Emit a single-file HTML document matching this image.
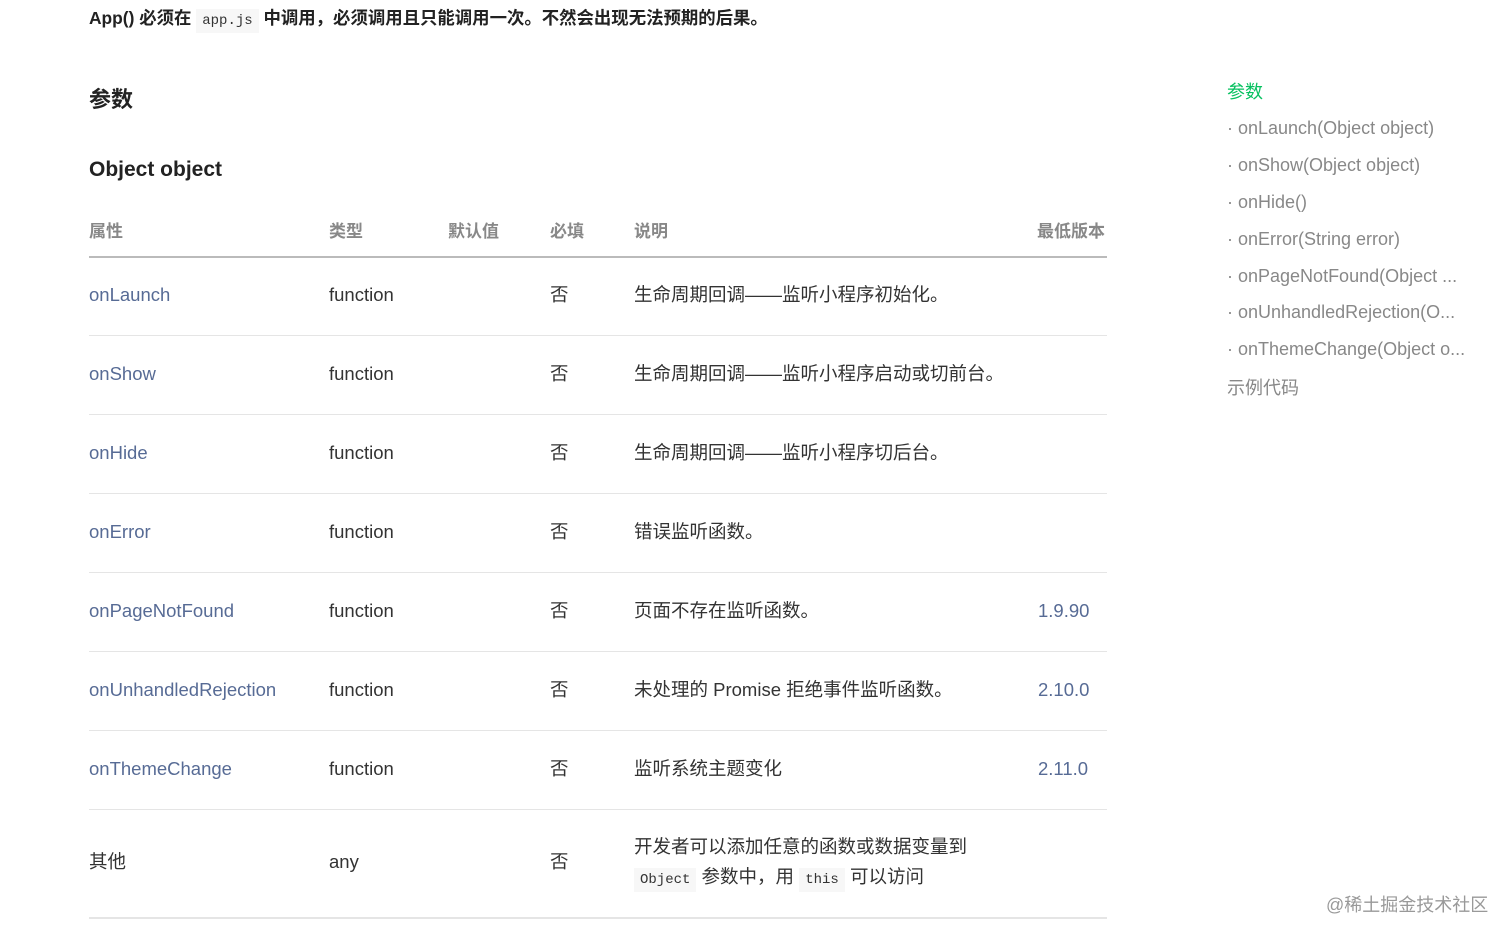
<!DOCTYPE html>
<html><head><meta charset="utf-8"><style>
body{margin:0;width:1512px;height:939px;background:#fff;font-family:"Liberation Sans","Noto Sans CJK SC",sans-serif;color:#333;position:relative;overflow:hidden}
.a{position:absolute;white-space:nowrap}
.t{font-size:18.5px;line-height:24px}
.lk{color:#576b95}
.h{font-size:17px;font-weight:bold;color:#888}
.line{position:absolute;left:89px;width:1018px;height:1px;background:#e5e5e5}
code{font-family:"Liberation Mono",monospace;font-size:14px;background:#f7f7f7;padding:4px 6px;color:#333}
.nav{font-size:18px;color:#888;line-height:24px}
</style></head><body>
<div class="a" style="left:89px;top:6px;font-size:17.4px;font-weight:bold;color:#222;line-height:24px">App() 必须在 <code style="font-weight:normal">app.js</code> 中调用，必须调用且只能调用一次。不然会出现无法预期的后果。</div>
<div class="a" style="left:89px;top:82px;font-size:22px;font-weight:bold;color:#222">参数</div>
<div class="a" style="left:89px;top:158px;font-size:21px;font-weight:bold;color:#222">Object object</div>

<div class="a h" style="left:89px;top:217px">属性</div>
<div class="a h" style="left:329px;top:217px">类型</div>
<div class="a h" style="left:448px;top:217px">默认值</div>
<div class="a h" style="left:550px;top:217px">必填</div>
<div class="a h" style="left:634px;top:217px">说明</div>
<div class="a h" style="left:1037px;top:217px">最低版本</div>
<div class="line" style="top:256px;height:2px;background:#bbb"></div>

<div class="a t lk" style="left:89px;top:283px">onLaunch</div><div class="a t" style="left:329px;top:283px">function</div><div class="a t" style="left:550px;top:283px">否</div><div class="a t" style="left:634px;top:283px">生命周期回调——监听小程序初始化。</div>
<div class="line" style="top:335px"></div>
<div class="a t lk" style="left:89px;top:362px">onShow</div><div class="a t" style="left:329px;top:362px">function</div><div class="a t" style="left:550px;top:362px">否</div><div class="a t" style="left:634px;top:362px">生命周期回调——监听小程序启动或切前台。</div>
<div class="line" style="top:414px"></div>
<div class="a t lk" style="left:89px;top:441px">onHide</div><div class="a t" style="left:329px;top:441px">function</div><div class="a t" style="left:550px;top:441px">否</div><div class="a t" style="left:634px;top:441px">生命周期回调——监听小程序切后台。</div>
<div class="line" style="top:493px"></div>
<div class="a t lk" style="left:89px;top:520px">onError</div><div class="a t" style="left:329px;top:520px">function</div><div class="a t" style="left:550px;top:520px">否</div><div class="a t" style="left:634px;top:520px">错误监听函数。</div>
<div class="line" style="top:572px"></div>
<div class="a t lk" style="left:89px;top:599px">onPageNotFound</div><div class="a t" style="left:329px;top:599px">function</div><div class="a t" style="left:550px;top:599px">否</div><div class="a t" style="left:634px;top:599px">页面不存在监听函数。</div><div class="a t lk" style="left:1038px;top:599px">1.9.90</div>
<div class="line" style="top:651px"></div>
<div class="a t lk" style="left:89px;top:678px">onUnhandledRejection</div><div class="a t" style="left:329px;top:678px">function</div><div class="a t" style="left:550px;top:678px">否</div><div class="a t" style="left:634px;top:678px">未处理的 Promise 拒绝事件监听函数。</div><div class="a t lk" style="left:1038px;top:678px">2.10.0</div>
<div class="line" style="top:730px"></div>
<div class="a t lk" style="left:89px;top:757px">onThemeChange</div><div class="a t" style="left:329px;top:757px">function</div><div class="a t" style="left:550px;top:757px">否</div><div class="a t" style="left:634px;top:757px">监听系统主题变化</div><div class="a t lk" style="left:1038px;top:757px">2.11.0</div>
<div class="line" style="top:809px"></div>
<div class="a t" style="left:89px;top:850px">其他</div><div class="a t" style="left:329px;top:850px">any</div><div class="a t" style="left:550px;top:850px">否</div>
<div class="a t" style="left:634px;top:835px">开发者可以添加任意的函数或数据变量到</div>
<div class="a t" style="left:634px;top:865px"><code>Object</code> 参数中，用 <code>this</code> 可以访问</div>
<div class="line" style="top:917px;height:2px"></div>

<div class="a nav" style="left:1227px;top:80px;color:#07c160">参数</div>
<div class="a nav" style="left:1227px;top:116px">· onLaunch(Object object)</div>
<div class="a nav" style="left:1227px;top:153px">· onShow(Object object)</div>
<div class="a nav" style="left:1227px;top:190px">· onHide()</div>
<div class="a nav" style="left:1227px;top:227px">· onError(String error)</div>
<div class="a nav" style="left:1227px;top:264px">· onPageNotFound(Object ...</div>
<div class="a nav" style="left:1227px;top:300px">· onUnhandledRejection(O...</div>
<div class="a nav" style="left:1227px;top:337px">· onThemeChange(Object o...</div>
<div class="a nav" style="left:1227px;top:376px">示例代码</div>
<div class="a" style="left:1326px;top:891px;font-size:18px;color:#999">@稀土掘金技术社区</div>
</body></html>
